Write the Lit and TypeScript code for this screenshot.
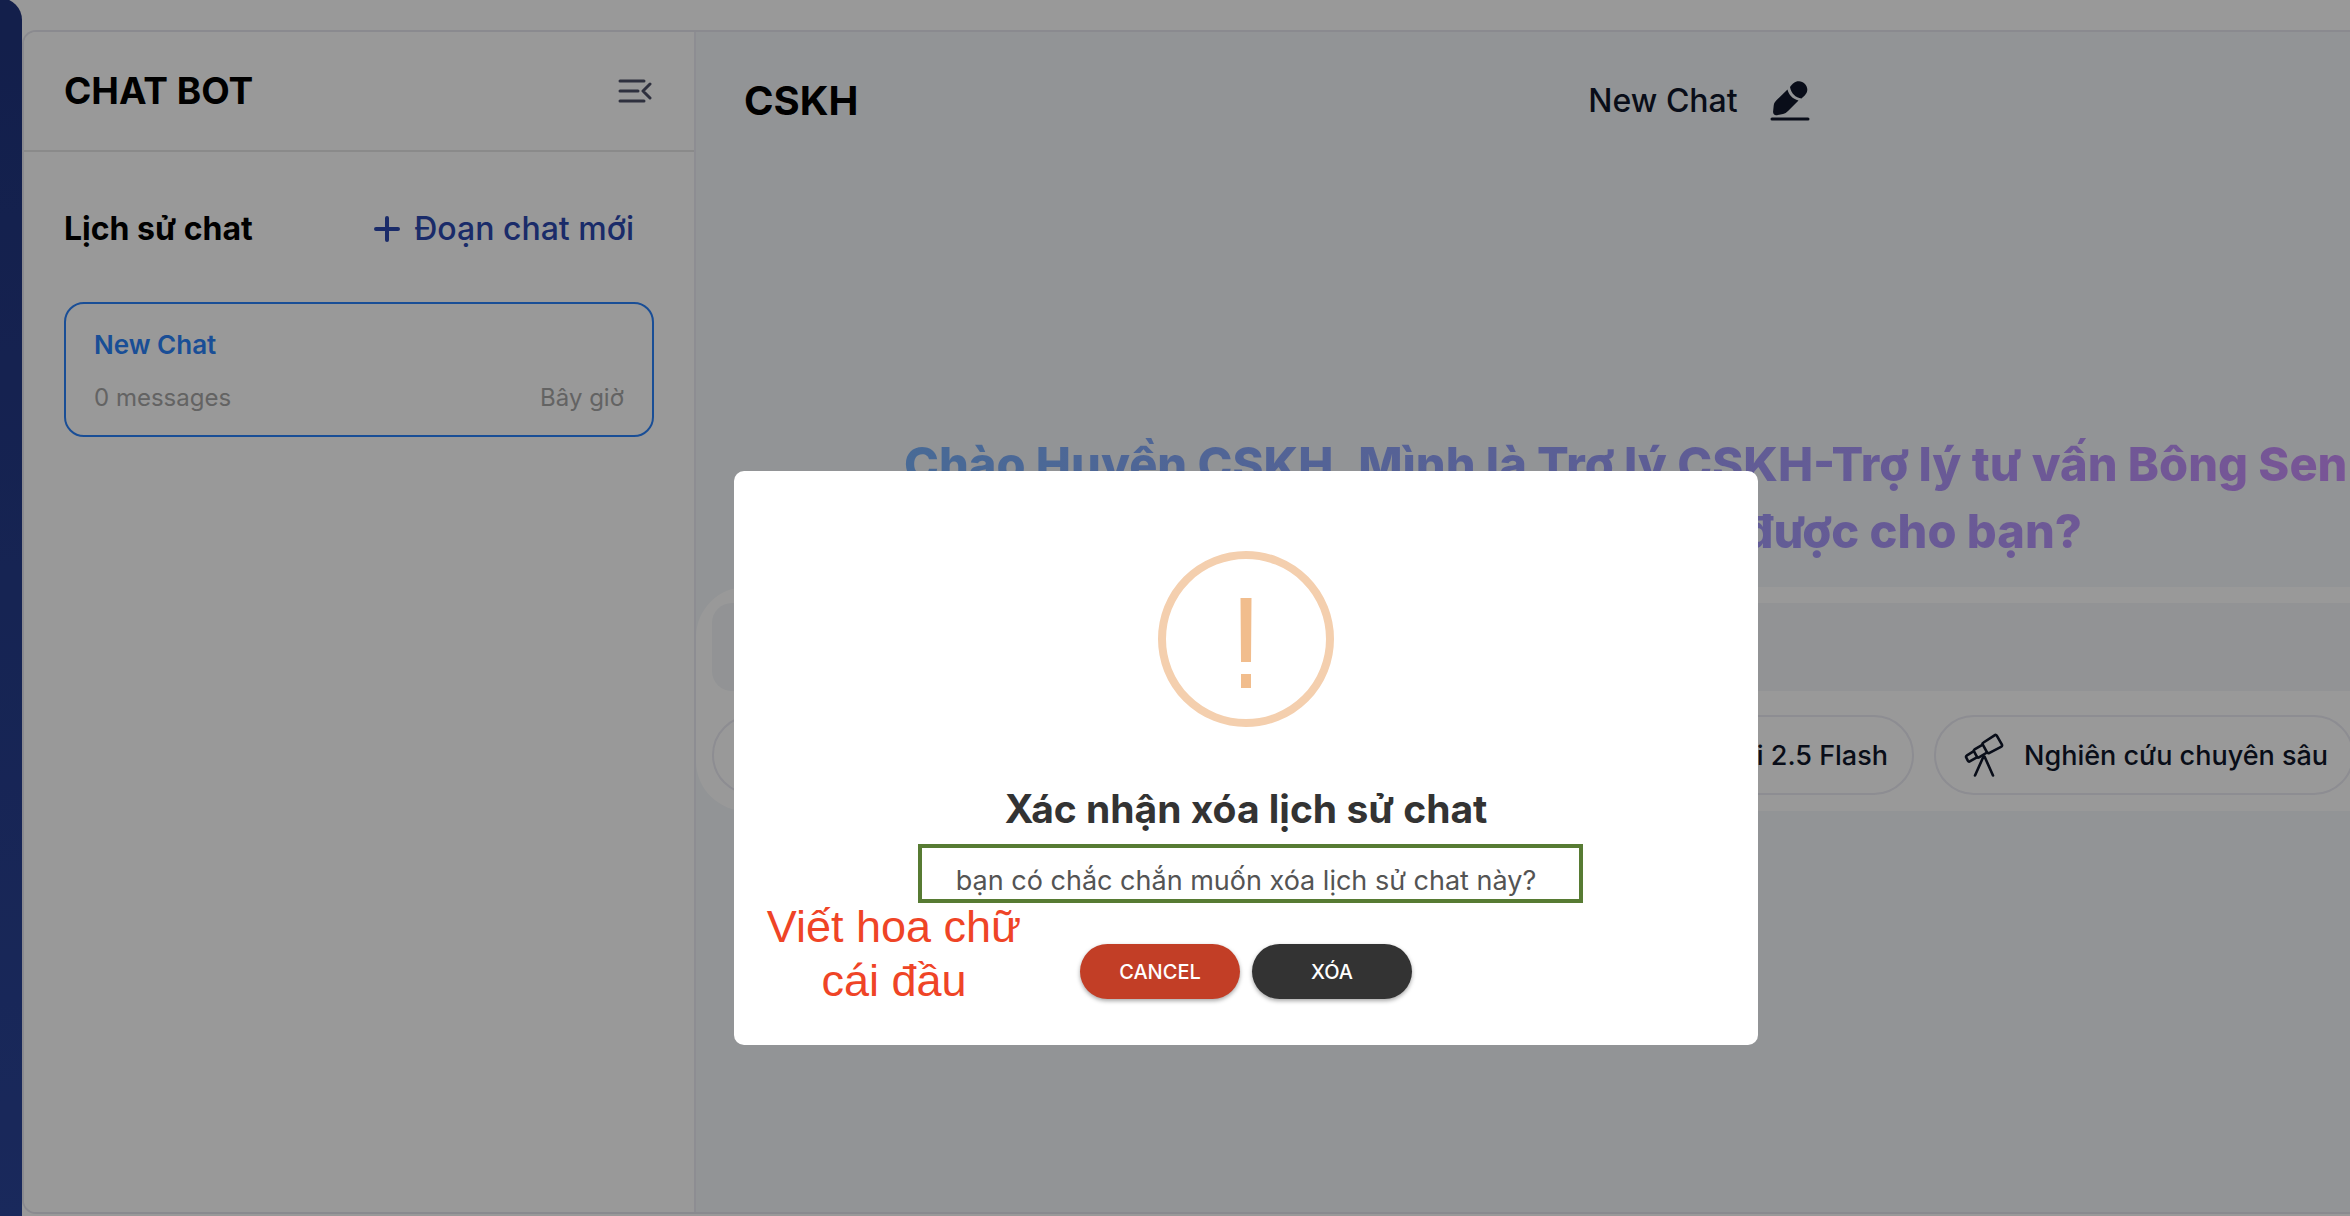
import { LitElement, html, css, svg } from "lit";
import { customElement } from "lit/decorators.js";

const collapseIcon = svg`<svg class="ico-collapse" viewBox="0 0 34 24" fill="none" stroke="#4e5168" stroke-width="3" stroke-linecap="round" stroke-linejoin="round" aria-hidden="true"><path d="M2 2h24M2 12h18M2 22h24M32 5l-7 7 7 7"/></svg>`;

const plusIcon = svg`<svg class="ico-plus" viewBox="0 0 26 26" stroke="#2c48b0" stroke-width="4" stroke-linecap="round" aria-hidden="true"><path d="M13 2v22M2 13h22"/></svg>`;

const pencilIcon = svg`<svg class="ico-pencil" viewBox="0 0 40 42" aria-hidden="true"><g fill="#0f172a"><path d="M17.500 9.500C18.500 14.500 22.500 19 28.500 20.500L18 31C16.500 32.500 15 33.500 13 34L7 35.200C4.500 35.700 2.800 34 3.100 31.500L3.700 25.500C4 23.500 4.700 22 6.200 20.500Z"/><path d="M20 7C22.500 3.500 25 1 29 1.200C33.500 1.500 37 5 37.300 9.300C37.500 13 35 15.500 31.500 18.500C25.500 18 21 13 20 7Z"/></g><path d="M2 39h36" stroke="#0f172a" stroke-width="3" stroke-linecap="round"/></svg>`;

const telescopeIcon = svg`<svg class="ico-scope" viewBox="0 0 40 46" fill="none" stroke="#0f172a" stroke-width="2.600" stroke-linecap="round" stroke-linejoin="round" aria-hidden="true"><path d="M19.500 10.500L30.500 3.300Q32 2.300 32.900 3.900L37.800 12.400Q38.600 14 37 14.800L25.500 20.800Q23.800 21.700 22.900 20.100L18.800 12.700Q18 11.400 19.500 10.500Z"/><path d="M18.700 12.600L10.600 17.400Q9.400 18.200 10 19.400L13 24.800Q13.700 26.100 15 25.400L23 20.500"/><path d="M9.800 19.200L3 23.300Q1.500 24.300 2.300 25.700L3.800 28.600Q4.700 30.100 6.200 29.200L13.300 25.200"/><path d="M19.500 24.500L11 43.500M20.500 24.500L29 43.500"/></svg>`;

const warningIcon = svg`<svg class="ico-warn" viewBox="0 0 176 176" aria-hidden="true"><circle cx="88" cy="88" r="84" fill="none" stroke="#f4cfae" stroke-width="8"/><path fill="#f1bd8d" d="M82.500 47h11l-.5 64h-10zM83 123h10v14h-10z"/></svg>`;

@customElement("chat-sidebar")
class ChatSidebar extends LitElement {
  static styles = css`
    :host { display: flex; flex-direction: column; box-sizing: border-box; background: #fff; border-right: 2px solid #ebebf3; }
    header { display: flex; align-items: center; justify-content: space-between; height: 118px; padding: 0 42px 0 40px; border-bottom: 2px solid #e6e6e6; }
    h1, h2, h3, p { margin: 0; }
    h1 { font-size: 37px; line-height: 48px; font-weight: 700; }
    button { font: inherit; background: none; border: 0; padding: 0; color: inherit; display: flex; align-items: center; cursor: pointer; }
    .ico-collapse { width: 34px; height: 24px; }
    .history { display: flex; align-items: center; justify-content: space-between; padding: 52px 60px 0 40px; height: 50px; }
    h2 { font-size: 32px; line-height: 48px; font-weight: 700; }
    .create { gap: 14px; font-size: 32px; line-height: 48px; font-weight: 500; color: #2c48b0; }
    .ico-plus { width: 26px; height: 26px; }
    .item { box-sizing: border-box; margin: 48px 40px 0; height: 135px; border: 2px solid #2b82fb; border-radius: 20px; padding: 21px 28px 19px; display: flex; flex-direction: column; justify-content: space-between; }
    h3 { font-size: 26px; line-height: 40px; font-weight: 600; color: #2b82fb; }
    .meta { display: flex; justify-content: space-between; font-size: 24px; line-height: 36px; color: #a6a6a6; }
  `;
  render() {
    return html`
      <header><h1>CHAT BOT</h1><button aria-label="Thu gọn">${collapseIcon}</button></header>
      <div class="history"><h2>Lịch sử chat</h2><button class="create">${plusIcon}<span>Đoạn chat mới</span></button></div>
      <article class="item"><h3>New Chat</h3><p class="meta"><span>0 messages</span><span>Bây giờ</span></p></article>`;
  }
}

@customElement("chat-stage")
class ChatStage extends LitElement {
  static styles = css`
    :host { display: block; overflow: hidden; background: #f4f7fa; }
    .wide { width: calc(100% + 352px); }
    header { display: grid; grid-template-columns: 1fr auto 1fr; align-items: center; padding: 38px 48px 0; height: 62px; }
    h1, h2, p { margin: 0; }
    h1 { font-size: 40px; line-height: 60px; font-weight: 700; }
    .topic { display: flex; align-items: center; gap: 32px; font-size: 32px; line-height: 60px; font-weight: 500; color: #0f172a; }
    button { font: inherit; color: inherit; background: none; border: 0; padding: 0; display: flex; align-items: center; cursor: pointer; }
    .ico-pencil { width: 40px; height: 42px; }
    .greeting { margin: 298px 208px 0; font-size: 47px; line-height: 67px; font-weight: 800; white-space: nowrap; color: transparent; background: linear-gradient(90deg, #78b1fb, #9a9df9 45%, #cb8dfb 92%); -webkit-background-clip: text; background-clip: text; }
    .greeting span { display: block; }
    .greeting .tail { text-align: right; padding-right: 412px; }
    .composer { box-sizing: border-box; margin-top: 23px; padding: 16px; background: #fff; border-radius: 50px; }
    input { display: block; box-sizing: border-box; width: 100%; height: 88px; border: 0; border-radius: 20px; background: #f3f6f9; padding: 0 32px; font: inherit; font-size: 28px; }
    .chips { display: flex; gap: 20px; margin-top: 24px; }
    .chip { box-sizing: border-box; height: 80px; border: 2px solid #ebebf3; border-radius: 40px; padding: 0 24px; gap: 20px; font-size: 27px; font-weight: 500; color: #0f172a; white-space: nowrap; }
    .model { width: 1202px; justify-content: flex-end; }
    .deep { padding-left: 28px; }
    .ico-scope { width: 40px; height: 46px; }
  `;
  render() {
    return html`<div class="wide">
      <header><h1>CSKH</h1><div class="topic"><span>New Chat</span><button aria-label="Đổi tên">${pencilIcon}</button></div></header>
      <h2 class="greeting"><span>Chào Huyền CSKH, Mình là Trợ lý CSKH-Trợ lý tư vấn Bông Sen V</span><span class="tail">được cho bạn?</span></h2>
      <div class="composer">
        <input type="text" aria-label="Tin nhắn">
        <div class="chips"><button class="chip model">Gemini 2.5 Flash</button><button class="chip deep">${telescopeIcon}<span>Nghiên cứu chuyên sâu</span></button></div>
      </div>
    </div>`;
  }
}

@customElement("confirm-dialog")
class ConfirmDialog extends LitElement {
  static styles = css`
    :host { position: absolute; inset: 0; box-sizing: border-box; display: flex; align-items: center; justify-content: center; padding: 300px 0 0 142px; background: rgba(0, 0, 0, 0.4); }
    .dialog { position: relative; box-sizing: border-box; width: 1024px; padding: 80px 32px 46px; border-radius: 10px; background: #fff; display: flex; flex-direction: column; align-items: center; }
    .ico-warn { width: 176px; height: 176px; }
    h2, p { margin: 0; }
    h2 { margin-top: 52px; font-size: 39px; line-height: 60px; font-weight: 700; color: #333; }
    .text { margin-top: 20px; font-size: 27px; line-height: 44px; color: #545454; }
    .actions { display: flex; gap: 12px; margin-top: 41px; }
    button { width: 160px; height: 55px; border: 0; border-radius: 28px; padding: 0; font: inherit; font-size: 20px; font-weight: 500; color: #fff; background: #333; box-shadow: 0 2px 4px rgba(0, 0, 0, 0.35); cursor: pointer; }
    .cancel { background: #c23e26; }
    .mark { position: absolute; left: 184px; top: 373px; width: 665px; height: 59px; box-sizing: border-box; border: 4px solid #577b33; }
    .note { position: absolute; left: 30px; top: 429px; width: 260px; text-align: center; font-family: "Liberation Sans", Arial, sans-serif; font-size: 45px; line-height: 54px; color: #ef4426; white-space: nowrap; }
  `;
  render() {
    return html`<div class="dialog" role="dialog" aria-modal="true" aria-labelledby="confirm-title">
      ${warningIcon}
      <h2 id="confirm-title">Xác nhận xóa lịch sử chat</h2>
      <p class="text">bạn có chắc chắn muốn xóa lịch sử chat này?</p>
      <div class="actions"><button class="cancel">CANCEL</button><button>XÓA</button></div>
      <div class="mark"></div>
      <p class="note">Viết hoa chữ<br>cái đầu</p>
    </div>`;
  }
}

@customElement("app-root")
class AppRoot extends LitElement {
  static styles = css`
    :host { display: block; position: relative; overflow: hidden; font-family: Inter, "Noto Sans", sans-serif; color: #000; background: #fff; }
    .page { display: flex; min-height: 100vh; box-sizing: border-box; }
    .rail { width: 22px; margin-top: -2px; border-top-right-radius: 24px; background: linear-gradient(#20347d, #2b4599); }
    .frame { flex: 1; min-width: 0; box-sizing: border-box; display: flex; margin: 30px 0 2px; border: 2px solid #e7e7ef; border-right: 0; border-radius: 14px 0 0 14px; overflow: hidden; }
    chat-sidebar { flex: 0 0 672px; }
    chat-stage { flex: 1; min-width: 0; }
  `;
  render() {
    return html`<div class="page"><div class="rail"></div><main class="frame"><chat-sidebar></chat-sidebar><chat-stage></chat-stage></main></div><confirm-dialog></confirm-dialog>`;
  }
}
